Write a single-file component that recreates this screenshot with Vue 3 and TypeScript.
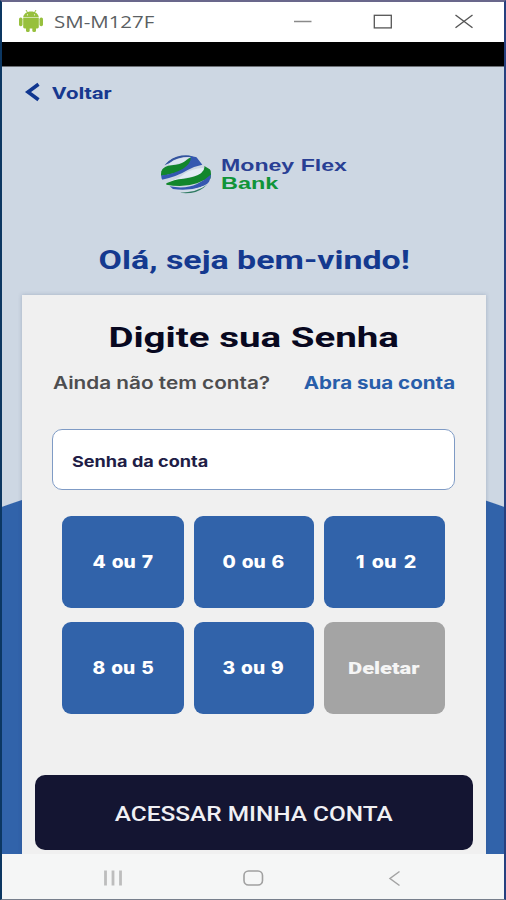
<script setup lang="ts">
interface Key {
  label: string
  kind: 'digit' | 'one' | 'delete'
}

const keys: Key[] = [
  { label: '4 ou 7', kind: 'digit' },
  { label: '0 ou 6', kind: 'digit' },
  { label: '1 ou 2', kind: 'one' },
  { label: '8 ou 5', kind: 'digit' },
  { label: '3 ou 9', kind: 'digit' },
  { label: 'Deletar', kind: 'delete' },
]
</script>

<template>
  <div class="window">
    <header class="titlebar">
      <svg class="android" viewBox="0 0 26 24" aria-hidden="true">
        <g fill="#97c03d">
          <path d="M5.200 8.200C5.600 4.800 8.600 2.400 13 2.400s7.400 2.400 7.800 5.800z" />
          <path d="M5.200 8.700h15.600v9.300q0 1.400-1.500 1.400H6.700q-1.500 0-1.500-1.400z" />
          <rect x="1" y="8.600" width="3.500" height="8.600" rx="1.600" />
          <rect x="21.500" y="8.600" width="3.500" height="8.600" rx="1.600" />
          <rect x="8" y="17" width="3.700" height="6" rx="1.500" />
          <rect x="14.300" y="17" width="3.700" height="6" rx="1.500" />
        </g>
        <path d="M8 1l1.800 3M18 1l-1.800 3" stroke="#97c03d" stroke-width="1" />
        <circle cx="9.500" cy="5.800" r=".6" fill="#fff" />
        <circle cx="16.500" cy="5.800" r=".6" fill="#fff" />
      </svg>
      <span class="device wide">SM-M127F</span>
      <svg class="controls" viewBox="0 0 184 20" fill="none" stroke="#555" aria-hidden="true">
        <path d="M3 10.500h17.500" stroke="#8a8a8a" stroke-width="1.500" />
        <rect x="83.300" y="4.300" width="17" height="12.600" stroke-width="1.300" />
        <path d="M164.500 4l17 12.800M181.500 4l-17 12.800" stroke-width="1.400" />
      </svg>
    </header>
    <div class="statusbar"></div>

    <main class="screen">
      <a class="back">
        <svg viewBox="0 0 16 20" fill="none" stroke="#0f3690" stroke-width="3.600" aria-hidden="true">
          <path d="M14.500 2.200L4 10l10.500 7.800" />
        </svg>
        <span class="back-label wide">Voltar</span>
      </a>

      <div class="brand">
        <svg class="globe" viewBox="15 18 156 120" aria-hidden="true">
          <defs>
            <clipPath id="globe-clip"><ellipse cx="93" cy="79" rx="75" ry="57" /></clipPath>
          </defs>
          <g clip-path="url(#globe-clip)">
            <path d="M28 52Q54 18 100 20l16 8Q70 24 44 45z" fill="#34549f" />
            <path d="M44 46Q66 29 102 28L86 43Q66 47 40 53z" fill="#dbe5ef" />
            <path d="M16 74Q24 54 50 52 76 50 90 40 100 28 118 26L130 42Q110 54 92 64 60 78 16 84z" fill="#12862c" />
            <path d="M16 83Q58 77 84 62 112 44 106 24L124 27 142 50Q120 54 98 66 66 86 18 96z" fill="#3558b0" />
            <path d="M44 100Q76 90 90 76 110 62 144 60L150 68Q138 82 116 86 84 88 44 102z" fill="#e3ebf3" />
            <path d="M34 106Q56 94 86 92 122 88 138 76 150 66 148 54L172 68 168 92Q146 94 126 106 84 120 34 110z" fill="#12862c" />
            <path d="M44 115Q92 124 126 108 148 98 170 78V98Q156 110 138 117 96 130 54 123z" fill="#3558b0" />
            <path d="M60 127Q106 132 144 114L152 116Q126 130 90 131z" fill="#d7e1ec" />
            <path d="M76 134Q124 134 154 112L168 104 130 134 92 138z" fill="#2f7a62" />
          </g>
        </svg>
        <div class="brand-name">
          <span class="brand-top wide">Money Flex</span>
          <span class="brand-bottom wide">Bank</span>
        </div>
      </div>

      <h1 class="welcome"><span class="wide">Olá, seja bem-vindo!</span></h1>

      <section class="card">
        <h2 class="card-title"><span class="wide">Digite sua Senha</span></h2>
        <div class="signup">
          <span class="question wide">Ainda não tem conta?</span>
          <a class="open-account wide">Abra sua conta</a>
        </div>
        <div class="field"><span class="wide">Senha da conta</span></div>
        <div class="keypad">
          <button v-for="key in keys" :key="key.label" type="button" class="key" :class="key.kind">
            <span class="wide">{{ key.label }}</span>
          </button>
        </div>
        <button type="button" class="submit"><span class="wide">ACESSAR MINHA CONTA</span></button>
      </section>
    </main>

    <nav class="navbar">
      <svg viewBox="0 0 502 45" fill="none" aria-hidden="true">
        <path d="M103.500 16.500v15M111 16.500v15M118.500 16.500v15" stroke="#bdbdbd" stroke-width="2.800" />
        <rect x="242" y="17" width="18.500" height="14" rx="4.500" stroke="#a0a0a0" stroke-width="1.600" />
        <path d="M397.500 17.500l-9.500 7 9.500 7" stroke="#a3a3a3" stroke-width="1.500" />
      </svg>
    </nav>
  </div>
</template>

<style>
body {
  margin: 0;
}
</style>

<style scoped>
.window {
  box-sizing: border-box;
  display: flex;
  flex-direction: column;
  width: 506px;
  height: 900px;
  border: solid #183865;
  border-width: 2px 2px 1px;
  border-color: #69678b #26407f #777f8c #0c3762;
  overflow: hidden;
  font-family: Roboto, "Liberation Sans", sans-serif;
}

/* Letterforms are drawn wider than the font's own proportions. */
.wide {
  display: inline-block;
  white-space: nowrap;
  transform: scaleX(var(--stretch));
}

.titlebar {
  display: flex;
  align-items: center;
  height: 40px;
  background: #fff;
}

.android {
  width: 26px;
  height: 24px;
  margin: 0 9.500px 2px 16px;
}

.device {
  --stretch: 1.28;
  transform-origin: left;
  color: #5b5f63;
  font: 400 16px/22px "Open Sans", sans-serif;
}

.controls {
  width: 184px;
  height: 20px;
  margin: 0 29px 3px auto;
}

.statusbar {
  height: 24px;
  background: #000;
  border-bottom: 1px solid #6c7075;
}

.screen {
  display: flex;
  flex-direction: column;
  height: 787px;
  background: radial-gradient(circle at 251px 1136px, #3163aa 739.500px, #cdd7e3 740.500px);
}

.back {
  display: flex;
  align-items: center;
  gap: 12px;
  height: 20px;
  margin: 15px 0 0 22px;
}

.back svg {
  width: 16px;
  height: 20px;
}

.back-label {
  --stretch: 1.38;
  transform-origin: left;
  margin-top: 4px;
  color: #17388f;
  font-size: 16px;
  font-weight: 700;
  line-height: 20px;
}

.brand {
  display: flex;
  gap: 9px;
  height: 40px;
  margin: 52px 0 0 158px;
}

.globe {
  width: 52px;
  height: 40px;
}

.brand-name {
  display: flex;
  flex-direction: column;
  align-items: flex-start;
  padding-top: 3px;
  font: 700 17px/18px "Liberation Sans", sans-serif;
}

.brand-top {
  --stretch: 1.36;
  transform-origin: left;
  color: #293f94;
}

.brand-bottom {
  --stretch: 1.38;
  transform-origin: left;
  color: #109438;
}

.welcome {
  --stretch: 1.305;
  margin: 50px 0 0;
  color: #14398f;
  font-size: 26px;
  font-weight: 700;
  line-height: 32px;
  text-align: center;
  padding-left: 3px;
}

.card {
  box-sizing: border-box;
  width: 464px;
  height: 559px;
  margin: auto auto 0 19.500px;
  padding: 25px 12.500px 0 13.500px;
  background: #f0f0f0;
  box-shadow: 0 0 4px rgba(40, 60, 100, 0.25);
  clip-path: inset(-4px -4px 0 -4px);
}

.card-title {
  --stretch: 1.375;
  margin: 0 0 20px;
  color: #080820;
  font-size: 28px;
  font-weight: 700;
  line-height: 36px;
  text-align: center;
}

.signup {
  display: flex;
  justify-content: space-between;
  height: 24px;
  margin: 0 17.500px;
  font: 600 17px/15px Inter, sans-serif;
}

.question {
  --stretch: 1.22;
  transform-origin: left;
  color: #4d4d4f;
}

.open-account {
  --stretch: 1.21;
  transform-origin: right;
  color: #285eaa;
  font-weight: 700;
}

.field {
  box-sizing: border-box;
  display: flex;
  align-items: center;
  height: 61px;
  margin: 29px 18px 0 17px;
  padding: 4px 0 0 19px;
  border: 1.500px solid #7f9bc5;
  border-radius: 10px;
  background: #fff;
  color: #211d46;
  font: 700 15px/20px Inter, sans-serif;
}

.field .wide {
  --stretch: 1.205;
  transform-origin: left;
}

.keypad {
  display: grid;
  grid-template-columns: 121.500px 120px 121.500px;
  grid-auto-rows: 92px;
  gap: 14px 10px;
  margin: 26px 0 0 27px;
}

.key {
  --stretch: 1.13;
  display: flex;
  align-items: center;
  justify-content: center;
  padding: 0 0 1px;
  border: 0;
  border-radius: 9px;
  background: #3163aa;
  color: #fff;
  font: 800 17px/22px Inter, sans-serif;
  word-spacing: 1.500px;
}

.key.one {
  --stretch: 1.16;
  padding-left: 3px;
  word-spacing: 2.500px;
}

.key.delete {
  --stretch: 1.29;
  background: #a4a4a4;
  color: #f5f5f5;
  font: 900 17px/22px Roboto, sans-serif;
}

.submit {
  --stretch: 1.19;
  display: flex;
  align-items: center;
  justify-content: center;
  width: 100%;
  height: 75px;
  margin-top: 61px;
  padding: 2px 0 0;
  border: 0;
  border-radius: 10px;
  background: #141532;
  color: #f0f0f4;
  font: 500 20.500px/26px Roboto, sans-serif;
}

.navbar {
  flex: 1;
  background: #f5f6f6;
}

.navbar svg {
  display: block;
  width: 502px;
  height: 45px;
}
</style>
